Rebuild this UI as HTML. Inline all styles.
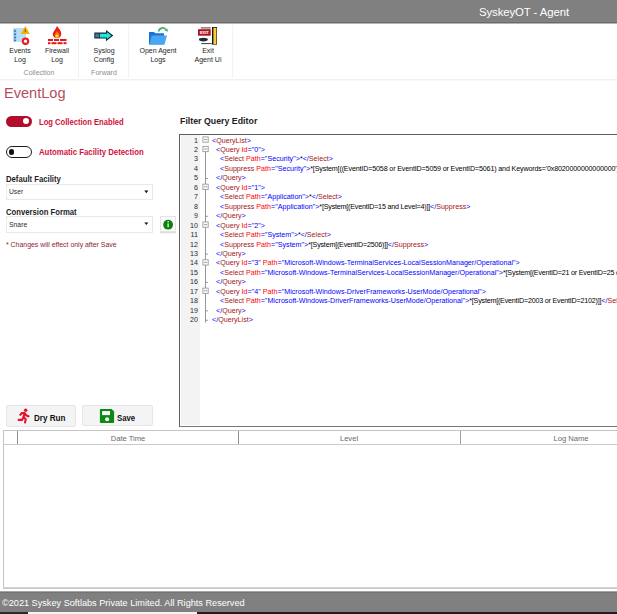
<!DOCTYPE html>
<html><head><meta charset="utf-8"><style>
html,body{margin:0;padding:0;}
body{width:617px;height:614px;position:relative;overflow:hidden;background:#fff;font-family:"Liberation Sans",sans-serif;}
.t{position:absolute;white-space:pre;line-height:1;}
svg{position:absolute;overflow:visible}
.c{font-family:"Liberation Sans",sans-serif;}
</style></head><body>
<div style="position:absolute;left:0px;top:0px;width:617px;height:22px;background:#808080"></div>
<div style="position:absolute;left:0px;top:21px;width:617px;height:1px;background:#858585"></div>
<div style="position:absolute;left:0px;top:22px;width:617px;height:1px;background:#686868"></div>
<div style="position:absolute;left:0px;top:23px;width:617px;height:1px;background:#b4b4b4"></div>
<div class="t" style="left:479.00px;top:6.55px;font-size:11.4px;color:#fff;letter-spacing:-0.1px;">SyskeyOT - Agent</div>
<div style="position:absolute;left:0px;top:79px;width:617px;height:1px;background:#f0f0f0"></div>
<div style="position:absolute;left:0px;top:80px;width:617px;height:1px;background:#fafafa"></div>
<div style="position:absolute;left:78px;top:25px;width:1px;height:53px;background:#f2f2f2"></div>
<div style="position:absolute;left:128px;top:25px;width:1px;height:53px;background:#f2f2f2"></div>
<div style="position:absolute;left:232px;top:25px;width:1px;height:53px;background:#f2f2f2"></div>
<div class="t" style="left:-80.00px;width:200px;text-align:center;top:46.84px;font-size:7.4px;color:#262626;transform:scaleX(0.95);transform-origin:50% 0;">Events</div>
<div class="t" style="left:-80.00px;width:200px;text-align:center;top:56.14px;font-size:7.4px;color:#262626;transform:scaleX(0.95);transform-origin:50% 0;">Log</div>
<div class="t" style="left:-43.00px;width:200px;text-align:center;top:46.84px;font-size:7.4px;color:#262626;transform:scaleX(0.95);transform-origin:50% 0;">Firewall</div>
<div class="t" style="left:-43.00px;width:200px;text-align:center;top:56.14px;font-size:7.4px;color:#262626;transform:scaleX(0.95);transform-origin:50% 0;">Log</div>
<div class="t" style="left:-61.00px;width:200px;text-align:center;top:69.34px;font-size:7.4px;color:#8c8c94;transform:scaleX(0.95);transform-origin:50% 0;">Collection</div>
<div class="t" style="left:4.00px;width:200px;text-align:center;top:46.84px;font-size:7.4px;color:#262626;transform:scaleX(0.95);transform-origin:50% 0;">Syslog</div>
<div class="t" style="left:4.00px;width:200px;text-align:center;top:56.14px;font-size:7.4px;color:#262626;transform:scaleX(0.95);transform-origin:50% 0;">Config</div>
<div class="t" style="left:4.00px;width:200px;text-align:center;top:69.34px;font-size:7.4px;color:#8c8c94;transform:scaleX(0.95);transform-origin:50% 0;">Forward</div>
<div class="t" style="left:58.30px;width:200px;text-align:center;top:46.84px;font-size:7.4px;color:#262626;transform:scaleX(0.95);transform-origin:50% 0;">Open Agent</div>
<div class="t" style="left:58.30px;width:200px;text-align:center;top:56.14px;font-size:7.4px;color:#262626;transform:scaleX(0.95);transform-origin:50% 0;">Logs</div>
<div class="t" style="left:107.80px;width:200px;text-align:center;top:46.84px;font-size:7.4px;color:#262626;transform:scaleX(0.95);transform-origin:50% 0;">Exit</div>
<div class="t" style="left:107.80px;width:200px;text-align:center;top:56.14px;font-size:7.4px;color:#262626;transform:scaleX(0.95);transform-origin:50% 0;">Agent Ui</div>
<svg style="left:0;top:0" width="617" height="80">
<rect x="13.3" y="28.3" width="12.3" height="13.2" fill="#9ccdf3"/>
<rect x="16.5" y="28.3" width="9.1" height="13.2" fill="#b8def9"/>
<g fill="#3b6fb0"><circle cx="15" cy="31" r="1"/><circle cx="15" cy="34.2" r="1"/><circle cx="15" cy="37.4" r="1"/><circle cx="15" cy="40.5" r="1"/></g>
<path d="M25.3 26 L29.8 34 L20.8 34 Z" fill="#f3b200"/>
<rect x="24.8" y="29" width="1" height="3" fill="#8a5a00"/>
<circle cx="25.5" cy="41.2" r="3.7" fill="#e81b1b"/>
<circle cx="25.5" cy="41.2" r="1.6" fill="#fff"/>
<!-- firewall -->
<path d="M57 26 C59 29 61.5 31 61.2 34.5 C61 37 59 38 57 38 C55 38 52.8 37 52.8 34.5 C52.8 32 55 30.5 57 26 Z" fill="#ee1c1c"/>
<path d="M57 31 C58.5 33 59.6 34 59.4 35.6 C59.2 37 58 37.6 57 37.6 C56 37.6 54.8 37 54.7 35.6 C54.6 34 56 33 57 31 Z" fill="#ff7a00"/>
<ellipse cx="57" cy="36" rx="1.6" ry="1.6" fill="#ffe600"/>
<g fill="#e8141c"><rect x="48" y="39" width="5" height="2"/><rect x="54" y="39" width="5" height="2"/><rect x="60" y="39" width="6.5" height="2"/>
<rect x="48" y="42.2" width="2.5" height="2"/><rect x="51.5" y="42.2" width="5" height="2"/><rect x="57.5" y="42.2" width="5" height="2"/><rect x="63.5" y="42.2" width="3" height="2"/></g>
<!-- syslog arrow -->
<path d="M94.3 32.6 H106 V30 L113.3 35.6 L106 41.2 V38.5 H94.3 Z" fill="#0c2a45"/>
<path d="M100 33.7 H107 V32.3 L111.4 35.6 L107 38.9 V37.4 H100 Z" fill="#1ee8d4"/>
<rect x="95.3" y="33.7" width="4" height="3.7" fill="#5b6f8f"/>
<!-- folder -->
<path d="M149 32 H154 L155.5 33.3 H164 V44.5 H149 Z" fill="#1a74d8"/>
<path d="M151.5 35.5 H167 L164.5 44.5 H149.5 Z" fill="#4aa6f0"/>
<path d="M158.5 31.5 C159.5 27.5 164.5 26.5 166.5 30.5" stroke="#4cb47a" stroke-width="1.8" fill="none"/>
<path d="M164.8 30.5 L168 31.8 L167.5 28.6 Z" fill="#4cb47a"/>
<!-- exit -->
<rect x="200.8" y="27" width="10" height="1.7" fill="#8d8d8d"/>
<rect x="198" y="29.2" width="12.7" height="6.5" fill="#c8202c"/>
<rect x="198.9" y="30.1" width="10.9" height="4.7" fill="none" stroke="#8a141c" stroke-width="0.7"/>
<text x="204.3" y="34.1" font-size="3.9" font-weight="700" fill="#fff" text-anchor="middle" font-family="Liberation Sans">EXIT</text>
<ellipse cx="203.4" cy="39.6" rx="4.5" ry="1.8" fill="#1f2f38"/>
<rect x="201.2" y="43.1" width="10.5" height="1" fill="#3a3a3a"/>
<rect x="212" y="27" width="5" height="17.6" fill="#161616"/>
<rect x="213.4" y="27.8" width="3" height="16.2" fill="#f6cf3a"/>
</svg>
<div class="t" style="left:3.80px;top:85.23px;font-size:15.2px;color:#b44e60;transform:scaleX(0.9595015576323987);transform-origin:0 0;">EventLog</div>
<div style="position:absolute;left:5.8px;top:115.6px;width:26.3px;height:11.8px;background:#b30d2c;border-radius:6px"></div>
<div style="position:absolute;left:23.1px;top:118.3px;width:6.2px;height:6.2px;background:#fff;border-radius:50%"></div>
<div style="position:absolute;left:5.8px;top:146.1px;width:26.3px;height:11.6px;box-sizing:border-box;border:1.4px solid #1e1e1e;border-radius:6px"></div>
<div style="position:absolute;left:9.1px;top:149.4px;width:5.2px;height:5.2px;background:#111;border-radius:50%"></div>
<div class="t" style="left:39.00px;top:117.75px;font-size:8.8px;color:#d0123c;transform:scaleX(0.8660531697341514);transform-origin:0 0;font-weight:700;">Log Collection Enabled</div>
<div class="t" style="left:39.00px;top:148.35px;font-size:8.8px;color:#d0123c;transform:scaleX(0.8850380388841927);transform-origin:0 0;font-weight:700;">Automatic Facility Detection</div>
<div class="t" style="left:6.20px;top:175.30px;font-size:8.5px;color:#1e1e1e;transform:scaleX(0.9057851239669421);transform-origin:0 0;font-weight:700;">Default Facility</div>
<div style="position:absolute;left:6px;top:184.3px;width:147px;height:15.5px;box-sizing:border-box;border:1px solid #e9e9e9;background:#fff"></div>
<div class="t" style="left:9.30px;top:188.28px;font-size:7.7px;color:#2e2a2a;transform:scaleX(0.87);transform-origin:0 0;">User</div>
<div class="t" style="left:6.20px;top:207.50px;font-size:8.5px;color:#1e1e1e;transform:scaleX(0.9062901155327341);transform-origin:0 0;font-weight:700;">Conversion Format</div>
<div style="position:absolute;left:6px;top:216.3px;width:147px;height:17.2px;box-sizing:border-box;border:1px solid #e9e9e9;background:#fff"></div>
<div class="t" style="left:9.30px;top:221.28px;font-size:7.7px;color:#2e2a2a;transform:scaleX(0.89);transform-origin:0 0;">Snare</div>
<svg style="left:0;top:0" width="200" height="240"><path d="M144.3 190.6 H148.3 L146.3 193.2 Z" fill="#111"/><path d="M144.3 222.4 H148.3 L146.3 225 Z" fill="#111"/></svg>
<div style="position:absolute;left:160px;top:216px;width:16px;height:16.2px;box-sizing:border-box;border:1px solid #e4e4e4;background:#fbfbfb;box-shadow:0 1.2px 0 #dcdcdc"></div>
<svg style="left:0;top:0" width="200" height="240"><circle cx="168.1" cy="224.7" r="4.9" fill="#0b800f"/><rect x="167.5" y="223.4" width="1.2" height="3.8" fill="#fff"/><circle cx="168.1" cy="221.7" r="0.75" fill="#fff"/></svg>
<div class="t" style="left:6.00px;top:241.15px;font-size:7.5px;color:#8e2535;transform:scaleX(0.9216013344453711);transform-origin:0 0;">* Changes will effect only after Save</div>
<div style="position:absolute;left:6.2px;top:405.3px;width:69.8px;height:21.5px;box-sizing:border-box;border:1px solid #e6e6e6;background:#f4f4f4;border-radius:2px"></div>
<div style="position:absolute;left:82px;top:404.8px;width:70.5px;height:21.5px;box-sizing:border-box;border:1px solid #e6e6e6;background:#f4f4f4;border-radius:2px"></div>
<svg style="left:0;top:0" width="200" height="440">
<g stroke="#e8112d" stroke-width="2.1" stroke-linecap="round" stroke-linejoin="round" fill="none">
<path d="M24.4 413.1 L23.6 417.3"/>
<path d="M20.3 414.8 L21.7 413.1 L24.4 413.0 L26.4 415.5 L28.5 416.3"/>
<path d="M23.6 417.3 L25.8 419.3 L25.0 422.6"/>
<path d="M23.6 417.3 L22.0 419.9 L18.7 419.9"/>
</g>
<circle cx="25.7" cy="410.2" r="1.75" fill="#e8112d"/>
<path d="M100.8 408.9 H111.6 L114.1 411.5 V421.9 Q114.1 422.9 113.1 422.9 H100.8 Q99.9 422.9 99.9 421.9 V409.9 Q99.9 408.9 100.8 408.9 Z" fill="#0d8a14"/>
<rect x="102.1" y="411.1" width="7.9" height="4.0" fill="#fff"/>
<circle cx="107.1" cy="419.3" r="2.0" fill="#fff"/>
</svg>
<div class="t" style="left:34.00px;top:413.94px;font-size:8.7px;color:#111;transform:scaleX(0.9319526627218936);transform-origin:0 0;font-weight:700;">Dry Run</div>
<div class="t" style="left:117.00px;top:414.22px;font-size:8.6px;color:#111;transform:scaleX(0.900497512437811);transform-origin:0 0;font-weight:700;">Save</div>
<div class="t" style="left:179.60px;top:115.70px;font-size:9.8px;color:#1e1e1e;transform:scaleX(0.8988372093023256);transform-origin:0 0;font-weight:700;">Filter Query Editor</div>
<div style="position:absolute;left:179px;top:134px;width:440px;height:293.2px;box-sizing:border-box;border:1.5px solid #5f5f5f;border-bottom-color:#777;border-right:none;background:#fff"></div>
<div style="position:absolute;left:180.5px;top:135px;width:19px;height:290px;background:#f3f3f3"></div>
<style>.code b{font-weight:400;color:#0000ff}.code m{color:#a31515}.code r{color:#ff0000}.code i{font-style:normal;letter-spacing:-0.22px}</style>
<div style="position:absolute;left:180.5px;top:135.5px;width:437px;height:290px;overflow:hidden">
<div class="t" style="left:-82.70px;top:1.07px;font-size:7.6px;color:#2b2b2b;width:100px;text-align:right;transform:scaleX(0.94);transform-origin:100% 0;">1</div>
<div class="t code" style="left:31.50px;top:1.07px;font-size:7.6px;color:#000;transform:scaleX(0.94);transform-origin:0 0;"><b>&lt;</b><m>QueryList</m><b>&gt;</b></div>
<div class="t" style="left:-82.70px;top:10.52px;font-size:7.6px;color:#2b2b2b;width:100px;text-align:right;transform:scaleX(0.94);transform-origin:100% 0;">2</div>
<div class="t code" style="left:35.50px;top:10.52px;font-size:7.6px;color:#000;transform:scaleX(0.94);transform-origin:0 0;"><b>&lt;</b><m>Query</m> <r>Id</r><b>="0"&gt;</b></div>
<div class="t" style="left:-82.70px;top:19.97px;font-size:7.6px;color:#2b2b2b;width:100px;text-align:right;transform:scaleX(0.94);transform-origin:100% 0;">3</div>
<div class="t code" style="left:39.50px;top:19.97px;font-size:7.6px;color:#000;transform:scaleX(0.94);transform-origin:0 0;"><b>&lt;</b><m>Select</m> <r>Path</r><b>="Security"&gt;</b>*<b>&lt;/</b><m>Select</m><b>&gt;</b></div>
<div class="t" style="left:-82.70px;top:29.42px;font-size:7.6px;color:#2b2b2b;width:100px;text-align:right;transform:scaleX(0.94);transform-origin:100% 0;">4</div>
<div class="t code" style="left:39.50px;top:29.42px;font-size:7.6px;color:#000;transform:scaleX(0.94);transform-origin:0 0;"><b>&lt;</b><m>Suppress</m> <r>Path</r><b>="Security"&gt;</b><i style="letter-spacing:-0.16px">*[System[((EventID=5058 or EventID=5059 or EventID=5061) and Keywords='0x8020000000000000')]]</i><b>&lt;/</b><m>Suppress</m><b>&gt;</b></div>
<div class="t" style="left:-82.70px;top:38.87px;font-size:7.6px;color:#2b2b2b;width:100px;text-align:right;transform:scaleX(0.94);transform-origin:100% 0;">5</div>
<div class="t code" style="left:35.50px;top:38.87px;font-size:7.6px;color:#000;transform:scaleX(0.94);transform-origin:0 0;"><b>&lt;/</b><m>Query</m><b>&gt;</b></div>
<div class="t" style="left:-82.70px;top:48.32px;font-size:7.6px;color:#2b2b2b;width:100px;text-align:right;transform:scaleX(0.94);transform-origin:100% 0;">6</div>
<div class="t code" style="left:35.50px;top:48.32px;font-size:7.6px;color:#000;transform:scaleX(0.94);transform-origin:0 0;"><b>&lt;</b><m>Query</m> <r>Id</r><b>="1"&gt;</b></div>
<div class="t" style="left:-82.70px;top:57.77px;font-size:7.6px;color:#2b2b2b;width:100px;text-align:right;transform:scaleX(0.94);transform-origin:100% 0;">7</div>
<div class="t code" style="left:39.50px;top:57.77px;font-size:7.6px;color:#000;transform:scaleX(0.94);transform-origin:0 0;"><b>&lt;</b><m>Select</m> <r>Path</r><b>="Application"&gt;</b>*<b>&lt;/</b><m>Select</m><b>&gt;</b></div>
<div class="t" style="left:-82.70px;top:67.22px;font-size:7.6px;color:#2b2b2b;width:100px;text-align:right;transform:scaleX(0.94);transform-origin:100% 0;">8</div>
<div class="t code" style="left:39.50px;top:67.22px;font-size:7.6px;color:#000;transform:scaleX(0.94);transform-origin:0 0;"><b>&lt;</b><m>Suppress</m> <r>Path</r><b>="Application"&gt;</b><i>*[System[(EventID=15 and Level=4)]]</i><b>&lt;/</b><m>Suppress</m><b>&gt;</b></div>
<div class="t" style="left:-82.70px;top:76.67px;font-size:7.6px;color:#2b2b2b;width:100px;text-align:right;transform:scaleX(0.94);transform-origin:100% 0;">9</div>
<div class="t code" style="left:35.50px;top:76.67px;font-size:7.6px;color:#000;transform:scaleX(0.94);transform-origin:0 0;"><b>&lt;/</b><m>Query</m><b>&gt;</b></div>
<div class="t" style="left:-82.70px;top:86.12px;font-size:7.6px;color:#2b2b2b;width:100px;text-align:right;transform:scaleX(0.94);transform-origin:100% 0;">10</div>
<div class="t code" style="left:35.50px;top:86.12px;font-size:7.6px;color:#000;transform:scaleX(0.94);transform-origin:0 0;"><b>&lt;</b><m>Query</m> <r>Id</r><b>="2"&gt;</b></div>
<div class="t" style="left:-82.70px;top:95.57px;font-size:7.6px;color:#2b2b2b;width:100px;text-align:right;transform:scaleX(0.94);transform-origin:100% 0;">11</div>
<div class="t code" style="left:39.50px;top:95.57px;font-size:7.6px;color:#000;transform:scaleX(0.94);transform-origin:0 0;"><b>&lt;</b><m>Select</m> <r>Path</r><b>="System"&gt;</b>*<b>&lt;/</b><m>Select</m><b>&gt;</b></div>
<div class="t" style="left:-82.70px;top:105.02px;font-size:7.6px;color:#2b2b2b;width:100px;text-align:right;transform:scaleX(0.94);transform-origin:100% 0;">12</div>
<div class="t code" style="left:39.50px;top:105.02px;font-size:7.6px;color:#000;transform:scaleX(0.94);transform-origin:0 0;"><b>&lt;</b><m>Suppress</m> <r>Path</r><b>="System"&gt;</b><i>*[System[(EventID=2506)]]</i><b>&lt;/</b><m>Suppress</m><b>&gt;</b></div>
<div class="t" style="left:-82.70px;top:114.47px;font-size:7.6px;color:#2b2b2b;width:100px;text-align:right;transform:scaleX(0.94);transform-origin:100% 0;">13</div>
<div class="t code" style="left:35.50px;top:114.47px;font-size:7.6px;color:#000;transform:scaleX(0.94);transform-origin:0 0;"><b>&lt;/</b><m>Query</m><b>&gt;</b></div>
<div class="t" style="left:-82.70px;top:123.92px;font-size:7.6px;color:#2b2b2b;width:100px;text-align:right;transform:scaleX(0.94);transform-origin:100% 0;">14</div>
<div class="t code" style="left:35.50px;top:123.92px;font-size:7.6px;color:#000;transform:scaleX(0.94);transform-origin:0 0;"><b>&lt;</b><m>Query</m> <r>Id</r><b>="3"</b> <r>Path</r><b>="Microsoft-Windows-TerminalServices-LocalSessionManager/Operational"&gt;</b></div>
<div class="t" style="left:-82.70px;top:133.37px;font-size:7.6px;color:#2b2b2b;width:100px;text-align:right;transform:scaleX(0.94);transform-origin:100% 0;">15</div>
<div class="t code" style="left:39.50px;top:133.37px;font-size:7.6px;color:#000;transform:scaleX(0.94);transform-origin:0 0;"><b>&lt;</b><m>Select</m> <r>Path</r><b>="Microsoft-Windows-TerminalServices-LocalSessionManager/Operational"&gt;</b><i>*[System[(EventID=21 or EventID=25 or EventID=24)]]</i><b>&lt;/</b><m>Select</m><b>&gt;</b></div>
<div class="t" style="left:-82.70px;top:142.82px;font-size:7.6px;color:#2b2b2b;width:100px;text-align:right;transform:scaleX(0.94);transform-origin:100% 0;">16</div>
<div class="t code" style="left:35.50px;top:142.82px;font-size:7.6px;color:#000;transform:scaleX(0.94);transform-origin:0 0;"><b>&lt;/</b><m>Query</m><b>&gt;</b></div>
<div class="t" style="left:-82.70px;top:152.27px;font-size:7.6px;color:#2b2b2b;width:100px;text-align:right;transform:scaleX(0.94);transform-origin:100% 0;">17</div>
<div class="t code" style="left:35.50px;top:152.27px;font-size:7.6px;color:#000;transform:scaleX(0.94);transform-origin:0 0;"><b>&lt;</b><m>Query</m> <r>Id</r><b>="4"</b> <r>Path</r><b>="Microsoft-Windows-DriverFrameworks-UserMode/Operational"&gt;</b></div>
<div class="t" style="left:-82.70px;top:161.72px;font-size:7.6px;color:#2b2b2b;width:100px;text-align:right;transform:scaleX(0.94);transform-origin:100% 0;">18</div>
<div class="t code" style="left:39.50px;top:161.72px;font-size:7.6px;color:#000;transform:scaleX(0.94);transform-origin:0 0;"><b>&lt;</b><m>Select</m> <r>Path</r><b>="Microsoft-Windows-DriverFrameworks-UserMode/Operational"&gt;</b><i>*[System[(EventID=2003 or EventID=2102)]]</i><b>&lt;/</b><m>Select</m><b>&gt;</b></div>
<div class="t" style="left:-82.70px;top:171.17px;font-size:7.6px;color:#2b2b2b;width:100px;text-align:right;transform:scaleX(0.94);transform-origin:100% 0;">19</div>
<div class="t code" style="left:35.50px;top:171.17px;font-size:7.6px;color:#000;transform:scaleX(0.94);transform-origin:0 0;"><b>&lt;/</b><m>Query</m><b>&gt;</b></div>
<div class="t" style="left:-82.70px;top:180.62px;font-size:7.6px;color:#2b2b2b;width:100px;text-align:right;transform:scaleX(0.94);transform-origin:100% 0;">20</div>
<div class="t code" style="left:31.50px;top:180.62px;font-size:7.6px;color:#000;transform:scaleX(0.94);transform-origin:0 0;"><b>&lt;/</b><m>QueryList</m><b>&gt;</b></div>
</div>
<svg style="left:0;top:0" width="617" height="440"><path d="M205.5 151.2 V322.6" stroke="#8a8a8a" stroke-width="0.9" fill="none"/><rect x="202.9" y="136.90" width="5.3" height="5.3" fill="#fff" stroke="#9a9a9a" stroke-width="0.9"/><path d="M204 139.55 H207.2" stroke="#8a8a8a" stroke-width="0.8"/><rect x="202.9" y="146.35" width="5.3" height="5.3" fill="#fff" stroke="#9a9a9a" stroke-width="0.9"/><path d="M204 149.00 H207.2" stroke="#8a8a8a" stroke-width="0.8"/><path d="M205.5 178.50 H207.9" stroke="#8a8a8a" stroke-width="0.9"/><rect x="202.9" y="184.15" width="5.3" height="5.3" fill="#fff" stroke="#9a9a9a" stroke-width="0.9"/><path d="M204 186.80 H207.2" stroke="#8a8a8a" stroke-width="0.8"/><path d="M205.5 216.30 H207.9" stroke="#8a8a8a" stroke-width="0.9"/><rect x="202.9" y="221.95" width="5.3" height="5.3" fill="#fff" stroke="#9a9a9a" stroke-width="0.9"/><path d="M204 224.60 H207.2" stroke="#8a8a8a" stroke-width="0.8"/><path d="M205.5 254.10 H207.9" stroke="#8a8a8a" stroke-width="0.9"/><rect x="202.9" y="259.75" width="5.3" height="5.3" fill="#fff" stroke="#9a9a9a" stroke-width="0.9"/><path d="M204 262.40 H207.2" stroke="#8a8a8a" stroke-width="0.8"/><path d="M205.5 282.45 H207.9" stroke="#8a8a8a" stroke-width="0.9"/><rect x="202.9" y="288.10" width="5.3" height="5.3" fill="#fff" stroke="#9a9a9a" stroke-width="0.9"/><path d="M204 290.75 H207.2" stroke="#8a8a8a" stroke-width="0.8"/><path d="M205.5 310.80 H207.9" stroke="#8a8a8a" stroke-width="0.9"/><path d="M205.5 320.25 H207.9" stroke="#8a8a8a" stroke-width="0.9"/></svg>
<div style="position:absolute;left:3px;top:430px;width:614px;height:159px;box-sizing:border-box;border:1px solid #c4c4c4;border-right:none;border-bottom:none;background:#fff"></div>
<div style="position:absolute;left:3px;top:587px;width:614px;height:1px;background:#d2d2d2"></div>
<div style="position:absolute;left:3px;top:588px;width:614px;height:1px;background:#c8c8c8"></div>
<div style="position:absolute;left:3px;top:444px;width:614px;height:1px;background:#c9c9c9"></div>
<div style="position:absolute;left:17px;top:431px;width:1px;height:13px;background:#8f8f8f"></div>
<div style="position:absolute;left:238px;top:431px;width:1px;height:13px;background:#8f8f8f"></div>
<div style="position:absolute;left:460px;top:431px;width:1px;height:13px;background:#a0a0a0"></div>
<div class="t" style="left:28.00px;width:200px;text-align:center;top:434.64px;font-size:8.1px;color:#6a6a6a;transform:scaleX(0.94);transform-origin:50% 0;">Date Time</div>
<div class="t" style="left:249.00px;width:200px;text-align:center;top:434.64px;font-size:8.1px;color:#6a6a6a;transform:scaleX(0.94);transform-origin:50% 0;">Level</div>
<div class="t" style="left:471.00px;width:200px;text-align:center;top:434.64px;font-size:8.1px;color:#6a6a6a;transform:scaleX(0.94);transform-origin:50% 0;">Log Name</div>
<div style="position:absolute;left:0px;top:591px;width:617px;height:21px;background:#808080"></div>
<div style="position:absolute;left:0px;top:591px;width:617px;height:1px;background:#a4a4a4"></div>
<div style="position:absolute;left:0px;top:592px;width:617px;height:1px;background:#737373"></div>
<div class="t" style="left:2.00px;top:598.47px;font-size:9.6px;color:#fff;transform:scaleX(0.9532783667059286);transform-origin:0 0;">©2021 Syskey Softlabs Private Limited. All Rights Reserved</div>
<div style="position:absolute;left:0px;top:612px;width:28px;height:2px;background:#2a2a2a"></div>
<div style="position:absolute;left:28px;top:612px;width:169px;height:2px;background:#f4f4f4"></div>
<div style="position:absolute;left:197px;top:612px;width:420px;height:2px;background:#2a1a20"></div>
</body></html>
